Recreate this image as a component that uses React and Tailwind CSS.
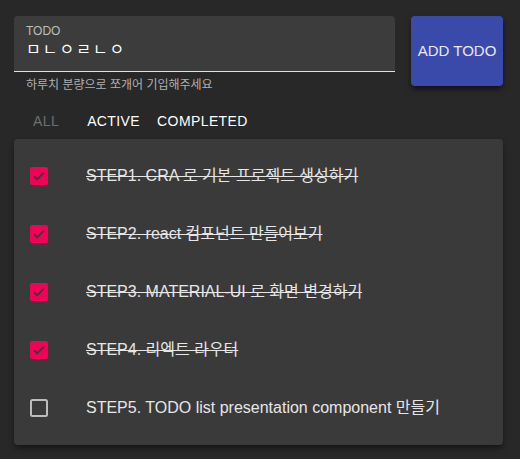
import React, { useState } from "react";

const initialTodos = [
	{ id: 1, text: "STEP1. CRA 로 기본 프로젝트 생성하기", done: true },
	{ id: 2, text: "STEP2. react 컴포넌트 만들어보기", done: true },
	{ id: 3, text: "STEP3. MATERIAL-UI 로 화면 변경하기", done: true },
	{ id: 4, text: "STEP4. 리엑트 라우터", done: true },
	{ id: 5, text: "STEP5. TODO list presentation component 만들기", done: false },
];

function CheckBox({ checked, onClick }) {
	return (
		<button onClick={onClick} className="w-[18px] h-[18px] flex items-center justify-center shrink-0">
			{checked ? (
				<svg width="18" height="18" viewBox="0 0 18 18">
					<rect x="0" y="0" width="18" height="18" rx="2" fill="#f50057" />
					<path d="M4 9.2l3.2 3.2L14 5.6" fill="none" stroke="#3a3a3a" strokeWidth="2" />
				</svg>
			) : (
				<svg width="18" height="18" viewBox="0 0 18 18">
					<rect x="1" y="1" width="16" height="16" rx="1.5" fill="none" stroke="#bdbdbd" strokeWidth="2" />
				</svg>
			)}
		</button>
	);
}

export default function App() {
	const [todos, setTodos] = useState(initialTodos);
	const [value, setValue] = useState("ㅁㄴㅇㄹㄴㅇ");

	function toggle(id) {
		setTodos(todos.map((t) => (t.id === id ? { ...t, done: !t.done } : t)));
	}

	return (
		<div
			className="w-[520px] h-[459px] bg-[#282828] text-white"
			style={{ fontFamily: "'Liberation Sans', 'Noto Sans CJK KR', sans-serif" }}
		>
			<div className="flex gap-4 pl-[14px] pr-[17px] pt-4">
				{/* Text field */}
				<div className="flex-1">
					<div className="h-[56px] bg-[#3c3c3c] rounded-t border-b border-[#e0e0e0] px-3 pt-[8px]">
						<div className="text-[12px] leading-[14px] text-[#bdbdbd]">TODO</div>
						<input
							value={value}
							onChange={(e) => setValue(e.target.value)}
							className="w-full bg-transparent outline-none text-[16px] leading-[24px] text-white tracking-[2px]"
						/>
					</div>
					<div className="px-3 mt-[5px] text-[12px] leading-[16px] text-[#b0b0b0]">하루치 분량으로 쪼개어 기입해주세요</div>
				</div>
				{/* Add button */}
				<button className="w-[92px] h-[70px] rounded bg-[#3a4aab] text-[15px] text-[#e8e8f8] shadow-md shadow-black/50">
					ADD TODO
				</button>
			</div>

			{/* Tabs */}
			<div className="flex items-center h-[36px] mt-[10px] pl-[33px] text-[14px] tracking-[0.4px]">
				<span className="text-[#6f6f6f]">ALL</span>
				<span className="ml-[28px] text-white">ACTIVE</span>
				<span className="ml-[17px] text-white">COMPLETED</span>
			</div>

			{/* List */}
			<div className="mx-[14px] w-[489px] bg-[#3a3a3a] rounded shadow-md shadow-black/40 py-2">
				{todos.map((t) => (
					<div key={t.id} className="h-[58px] flex items-center pl-4">
						<CheckBox checked={t.done} onClick={() => toggle(t.id)} />
						<span
							className={
								"ml-[38px] text-[16px] text-[#e6e6e6] " + (t.done ? "line-through decoration-[#e6e6e6]" : "")
							}
						>
							{t.text}
						</span>
					</div>
				))}
			</div>
		</div>
	);
}
